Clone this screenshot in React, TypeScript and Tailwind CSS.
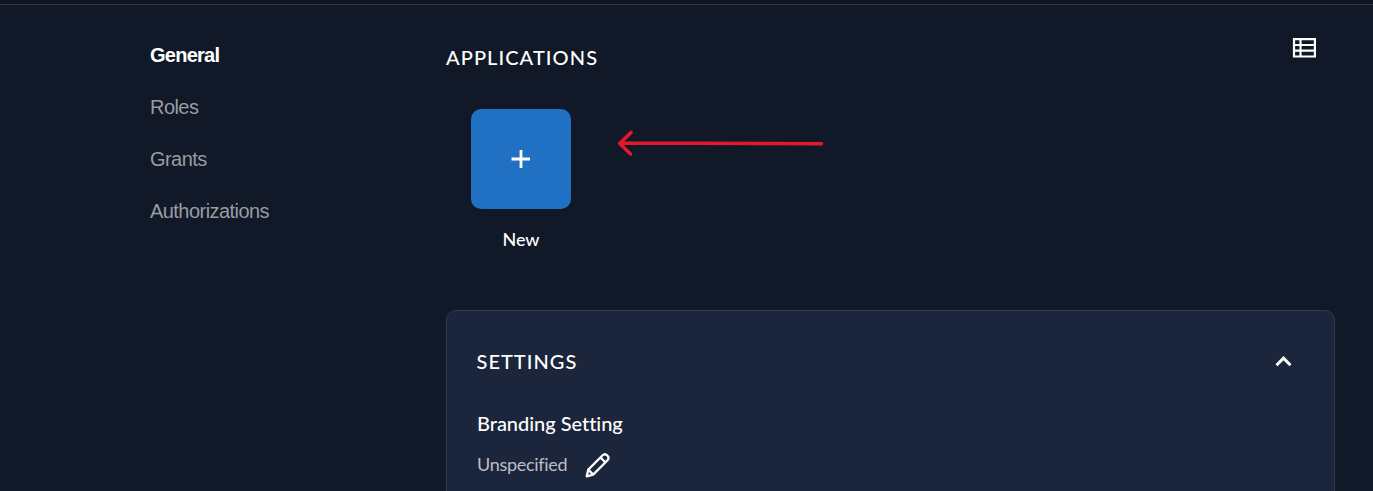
const navItems = ["Roles", "Grants", "Authorizations"];

function SideNav() {
  return (
    <nav className="flex w-[296px] shrink-0 flex-col gap-[28px] pt-[38px] font-['Liberation_Sans',sans-serif] text-[20px] leading-6 tracking-[-0.55px] text-[#999ca3]">
      <a className="font-bold tracking-[-0.75px] text-white">General</a>
      {navItems.map((item) => (
        <a key={item}>{item}</a>
      ))}
    </nav>
  );
}

function TableIcon() {
  return (
    <svg className="mt-[33px] mr-[19px] h-5 w-6" viewBox="0 0 24 20" fill="none" stroke="#fff" strokeWidth="2.2">
      <path d="M2 1.2H22.9V18.5H2ZM2 7H22.9M2 12.7H22.9M8.5 1.2V18.5" />
    </svg>
  );
}

function Arrow() {
  return (
    <svg className="absolute top-[20px] left-[144.5px] h-[30px] w-[210px]" viewBox="0 0 210 30" fill="none" stroke="#e3172d" strokeWidth="3.6" strokeLinecap="round" strokeLinejoin="round">
      <path d="M15 3.5L3.8 14.5L14.5 25M3.8 14L205.5 14.8" />
    </svg>
  );
}

function Applications() {
  return (
    <section>
      <header className="flex items-start justify-between">
        <h2 className="pt-[40px] text-[20px] leading-6 font-medium tracking-[1.08px]">APPLICATIONS</h2>
        <TableIcon />
      </header>
      <div className="relative mt-[40px] ml-[25px] flex w-[100px] flex-col items-center">
        <button className="flex size-[100px] items-center justify-center rounded-[10px] bg-[#2071c4]">
          <svg className="size-5" viewBox="0 0 20 20" stroke="#fff" strokeWidth="2.8">
            <path d="M.5 10H19M10 1V19" />
          </svg>
        </button>
        <span className="mt-[18px] text-[18px] leading-6 font-medium tracking-[-0.1px]">New</span>
        <Arrow />
      </div>
    </section>
  );
}

function Settings() {
  return (
    <section className="mt-[59px] h-[260px] rounded-[10px] border border-[#303a4e] bg-[#1b253b] px-[30px] pt-[38px]">
      <header className="flex items-center justify-between">
        <h2 className="-ml-[0.5px] text-[20px] leading-6 font-medium tracking-[1.03px]">SETTINGS</h2>
        <svg className="mr-[12px] h-[11px] w-[17px]" viewBox="0 0 17 11" fill="none" stroke="#fff" strokeWidth="3">
          <path d="M1.5 9.2L8.5 2.2L15.5 9.2" />
        </svg>
      </header>
      <h3 className="mt-[38px] text-[20px] leading-6 font-medium tracking-[-0.03px] [font-variant-ligatures:none]">Branding Setting</h3>
      <div className="mt-[17px] flex items-start gap-[17px]">
        <span className="w-[91px] text-[18px] leading-6 tracking-[-0.3px] text-[#bbbec5]">Unspecified</span>
        <svg className="mt-px size-[25px]" viewBox="0 0 25 25" fill="none" stroke="#fff" strokeWidth="2.3" strokeLinejoin="round">
          <path d="M1.7 23.3L3.3 16.6L17.4 2.5C20.8-.7 25.5 4.2 22.3 7.5L8.2 21.6ZM15.5 4.5L20.5 9.5M3.3 16.6L8.2 21.6" />
        </svg>
      </div>
    </section>
  );
}

export default function App() {
  return (
    <div className="flex h-[491px] flex-col overflow-hidden bg-[#111827] font-['Lato',sans-serif] text-white">
      <div className="h-[5px] shrink-0 border-b border-[#303441] bg-[#111421]" />
      <div className="flex grow pl-[150px]">
        <SideNav />
        <main className="w-[889px] shrink-0">
          <Applications />
          <Settings />
        </main>
      </div>
    </div>
  );
}
